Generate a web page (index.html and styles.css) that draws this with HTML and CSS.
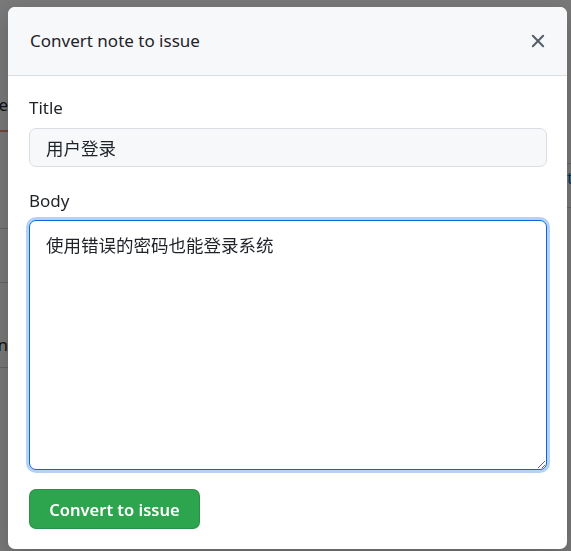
FILE: index.html
```html
<!DOCTYPE html>
<html lang="en">
<head>
<meta charset="utf-8">
<title>Convert note to issue</title>
<link rel="stylesheet" href="styles.css">
</head>
<body>
<div class="page">
  <div class="sliver sliver-left">
    <div class="bg-tab">Proje</div>
    <div class="bg-underline"></div>
    <div class="bg-row bg-row-1"></div>
    <div class="bg-row bg-row-2"></div>
    <div class="bg-text">Column</div>
    <div class="bg-row bg-row-3"></div>
  </div>
  <div class="sliver sliver-right">
    <div class="bg-row bg-r1"></div>
    <div class="bg-text-r">t</div>
    <div class="bg-row bg-r2"></div>
  </div>
</div>
<div class="overlay"></div>
<div class="dialog" role="dialog" aria-labelledby="dlg-title">
  <div class="dialog-header">
    <h1 id="dlg-title" class="dialog-title">Convert note to issue</h1>
    <button class="close-btn" aria-label="Close">
      <svg width="16" height="16" viewBox="0 0 16 16" aria-hidden="true"><path d="M3.72 3.72a.75.75 0 0 1 1.06 0L8 6.94l3.22-3.22a.749.749 0 0 1 1.06 1.06L9.06 8l3.22 3.22a.749.749 0 0 1-1.06 1.06L8 9.06l-3.22 3.22a.749.749 0 0 1-1.06-1.06L6.94 8 3.72 4.780a.75.75 0 0 1 0-1.06Z" fill="#57606a"/></svg>
    </button>
  </div>
  <div class="dialog-body">
    <label class="field-label" for="title">Title</label>
    <input id="title" class="field-input" type="text" value="用户登录">
    <label class="field-label label-body" for="body">Body</label>
    <textarea id="body" class="field-textarea">使用错误的密码也能登录系统</textarea>
    <div class="actions">
      <button class="btn-primary">Convert to issue</button>
    </div>
  </div>
</div>
</body>
</html>
```
FILE: styles.css
```css
* { box-sizing: border-box; }
html, body { margin: 0; padding: 0; height: 100%; }
body {
  font-family: "Noto Sans", "Open Sans", "Noto Sans CJK SC", sans-serif;
  color: #1f2328;
  background: #ffffff;
  overflow: hidden;
}
.page {
  display: flex;
  justify-content: space-between;
  height: 100%;
}
.sliver { position: relative; height: 100%; overflow: hidden; }
.sliver-left { width: 8px; }
.sliver-right { width: 4px; }
.bg-tab {
  direction: rtl;
  white-space: nowrap;
  margin-top: 93px;
  font-size: 17px;
  line-height: 24px;
  color: #1f2328;
}
.bg-underline { height: 2px; background: #fd8c73; margin-top: 13px; }
.bg-row { height: 1px; background: #d0d7de; }
.bg-row-1 { margin-top: 96px; }
.bg-row-2 { margin-top: 53px; }
.bg-text {
  direction: rtl; white-space: nowrap;
  margin-top: 50px; font-size: 17px; line-height: 24px; color: #1f2328;
}
.bg-row-3 { margin-top: 10px; }
.bg-r1 { margin-top: 163px; }
.bg-text-r { font-size: 17px; line-height: 24px; color: #0969da; margin-top: 2px; }
.bg-r2 { margin-top: 17px; }

.overlay {
  position: fixed;
  inset: 0;
  background: rgba(0, 0, 0, 0.53);
}
.dialog {
  position: fixed;
  left: 8px;
  top: 7px;
  width: 559px;
  height: 542px;
  background: #ffffff;
  border-radius: 7px;
  display: flex;
  flex-direction: column;
  overflow: hidden;
  box-shadow: 0 8px 24px rgba(0, 0, 0, 0.2);
}
.dialog-header {
  height: 69px;
  background: #f6f8fa;
  border-bottom: 1px solid #d8dee4;
  display: flex;
  align-items: center;
  justify-content: space-between;
  padding: 0 17px 0 22px;
}
.dialog-title {
  margin: 0;
  font-size: 17px;
  font-weight: 400;
  line-height: 24px;
  color: #1f2328;
}
.close-btn {
  border: 0;
  background: transparent;
  padding: 0;
  width: 24px;
  height: 24px;
  display: flex;
  align-items: center;
  justify-content: center;
  cursor: pointer;
}
.close-btn svg { width: 22px; height: 22px; }
.dialog-body {
  padding: 20px 20px 20px 21px;
  display: flex;
  flex-direction: column;
}
.field-label {
  font-size: 17px;
  line-height: 24px;
  font-weight: 400;
  color: #1f2328;
  margin-bottom: 8px;
}
.label-body { margin-top: 22px; margin-bottom: 7px; }
.field-input {
  height: 39px;
  width: 100%;
  font-family: inherit;
  font-size: 17.5px;
  color: #1f2328;
  background: #f6f8fa;
  border: 1px solid #d8dee4;
  border-radius: 7px;
  padding: 0 16px;
  outline: none;
}
.field-textarea {
  height: 250px;
  width: 100%;
  font-family: inherit;
  font-size: 17.5px;
  line-height: 26px;
  color: #1f2328;
  background: #ffffff;
  border: 1px solid #0969da;
  border-radius: 7px;
  padding: 11px 16px;
  outline: none;
  box-shadow: 0 0 0 3px rgba(9, 105, 218, 0.3);
  resize: vertical;
}
.actions { margin-top: 19px; display: flex; }
.btn-primary {
  height: 40px;
  width: 171px;
  padding: 0;
  font-family: inherit;
  font-size: 16.5px;
  font-weight: 600;
  color: #ffffff;
  background: #2da44e;
  border: 1px solid rgba(27, 31, 36, 0.15);
  border-radius: 7px;
  cursor: pointer;
}
```
